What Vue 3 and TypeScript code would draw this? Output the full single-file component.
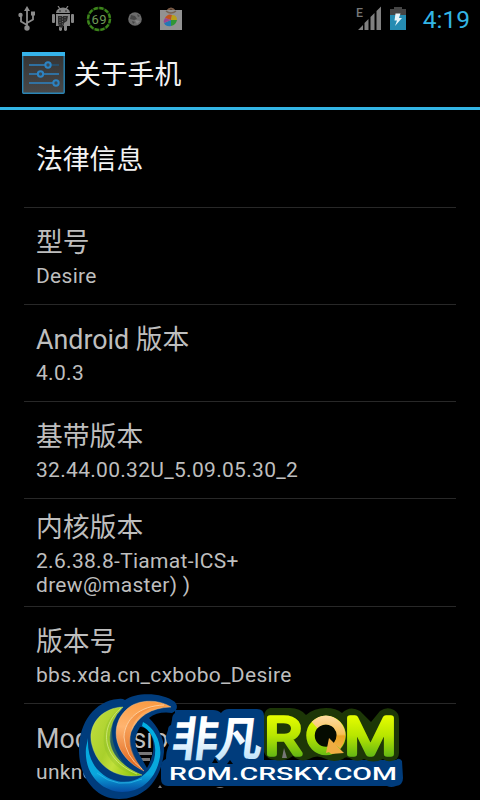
<script setup lang="ts">
interface Item {
  title: string;
  lines: string[];
  kind?: 'heading' | 'tall';
}

const items: Item[] = [
  { title: '法律信息', lines: [], kind: 'heading' },
  { title: '型号', lines: ['Desire'] },
  { title: 'Android 版本', lines: ['4.0.3'] },
  { title: '基带版本', lines: ['32.44.00.32U_5.09.05.30_2'] },
  { title: '内核版本', lines: ['2.6.38.8-Tiamat-ICS+', 'drew@master) )'], kind: 'tall' },
  { title: '版本号', lines: ['bbs.xda.cn_cxbobo_Desire'] },
  { title: 'Mod version', lines: ['unknown'] },
];
</script>

<template>
  <div class="phone">
    <!-- STATUS BAR -->
    <header class="status-bar">
      <div class="notifications">
        <svg class="usb" width="20" height="26" viewBox="0 0 20 26">
          <g fill="none" stroke="#8c8c8c" stroke-width="1.8">
            <path d="M10 4v17M10 19L4 15.500V11M10 17l6-3.500V9" />
          </g>
          <g fill="#8c8c8c">
            <path d="M10 0l3 5H7z" />
            <circle cx="10" cy="22" r="2.700" />
            <circle cx="3.500" cy="9" r="2.200" />
            <path d="M14 5.500h4v4h-4z" />
          </g>
        </svg>
        <svg class="droid" width="24" height="26" viewBox="0 0 24 26">
          <path d="M7 0l2 3M17 0l-2 3" stroke="#858585" stroke-width="1.200" />
          <path d="M5 7a7 5.500 0 0 1 14 0z" fill="#858585" />
          <g fill="#858585">
            <rect x="1" y="8" width="3" height="9" rx="1" />
            <rect x="20" y="8" width="3" height="9" rx="1" />
            <path d="M5 8h14v12h-3v4q-1.500 2-3 0v-4h-2v4q-1.500 2-3 0v-4H5z" />
          </g>
          <path d="M7 10h10l-1 5-3 2-1 5-4-1-1-4z" fill="#2c2c2c" />
          <path d="M9 11v8M11.500 10v9M14 11v4" stroke="#6c6c6c" stroke-dasharray="1 1.500" />
          <circle cx="9" cy="5" r=".8" fill="#222" />
          <circle cx="15" cy="5" r=".8" fill="#222" />
        </svg>
        <svg class="battery-ring" width="26" height="26" viewBox="0 0 26 26">
          <circle cx="13" cy="13" r="11" fill="none" stroke="#14300b" stroke-width="2.400" />
          <circle cx="13" cy="13" r="11" fill="none" stroke="#3d851b" stroke-width="2.400" stroke-dasharray="4.200 1.560" />
          <text x="13.200" y="17.700" text-anchor="middle" font-size="13" letter-spacing=".4" fill="#6f9b58">69</text>
        </svg>
        <svg class="moon" width="16" height="16" viewBox="0 0 16 16">
          <circle cx="8" cy="8" r="6.800" fill="#6b6b6b" />
          <path d="M4 4l4 1 2 3-3 1-4-1zM10 3l3 2-2 1zM5 10l3 1-2 2z" fill="#454545" />
          <path d="M8 9l5 1-3 3z" fill="#858585" />
        </svg>
        <svg class="market" width="24" height="26" viewBox="0 0 24 26">
          <path d="M8 5Q12 0 16 5" fill="none" stroke="#795a46" stroke-width="2" />
          <path d="M1 4h22v20H1z" fill="#929292" />
          <path d="M7 5q5 4 10 0" fill="none" stroke="#766454" stroke-width="1.500" />
          <path d="M6 12q3-5 7-3l-1 5z" fill="#c0531f" />
          <path d="M13 9q5 0 5 5l-6 0z" fill="#b9a019" />
          <path d="M18 14q-1 5-6 6v-6z" fill="#2f9636" />
          <path d="M12 14v6q-5 1-7-3z" fill="#2477b5" />
          <path d="M5 17q-1-2 1-5l6 2z" fill="#9b4790" />
        </svg>
      </div>
      <div class="system">
        <svg width="28" height="26" viewBox="0 0 28 26">
          <text x="1" y="11" font-size="13" font-weight="500" textLength="7" lengthAdjust="spacingAndGlyphs" fill="#777">E</text>
          <path d="M3 24l5-5v5zM9.500 24v-7l4-4v11zM15.500 24V11l4-4v17zM21.500 24V5l4.500-4.500V24z" fill="#808080" />
        </svg>
        <svg width="16" height="24" viewBox="0 0 16 24">
          <path d="M0 2h4V0h8v2h4v6H0z" fill="#454545" />
          <path d="M0 8h16v15H0z" fill="#258cb2" />
          <path d="M5.500 6.500h5L9 11h3l-7 8 2-5.500H4.500z" fill="#e8f5fa" />
        </svg>
        <span class="clock">4:19</span>
      </div>
    </header>

    <!-- ACTION BAR -->
    <div class="action-bar">
      <svg width="44" height="42" viewBox="0 0 44 42">
        <defs>
          <linearGradient id="tile" x2="0" y2="1">
            <stop stop-color="#333" />
            <stop offset="1" stop-color="#484848" />
          </linearGradient>
        </defs>
        <rect x=".7" y=".7" width="41.500" height="40.500" rx="1" fill="url(#tile)" stroke="#2a85b5" stroke-width="1.400" />
        <path d="M0 0h43v4H0z" fill="#36b3ea" />
        <g stroke="#2d83c2" stroke-width="1.500" fill="#3a4a55">
          <path d="M7 13h16M7 22h9M21 22h16M7 31h25" />
          <path d="M29 13h8" stroke="#235477" />
          <circle cx="26" cy="13" r="2.700" stroke-width="2" />
          <circle cx="18.500" cy="22" r="2.700" stroke-width="2" />
          <circle cx="34" cy="31" r="2.700" stroke-width="2" />
        </g>
      </svg>
      <h1>关于手机</h1>
    </div>

    <!-- PREFERENCE LIST -->
    <main class="list">
      <section v-for="item in items" :key="item.title" class="item" :class="item.kind">
        <h2>{{ item.title }}</h2>
        <p v-for="line in item.lines" :key="line">{{ line }}</p>
      </section>
    </main>

    <!-- WATERMARK -->
    <svg class="watermark" width="340" height="110" viewBox="70 690 340 110">
      <defs>
        <linearGradient id="lime" x1="0" y1=".2" x2="1" y2=".8">
          <stop stop-color="#bfdc3c" />
          <stop offset=".4" stop-color="#a9d02c" />
          <stop offset=".6" stop-color="#c2e03c" />
          <stop offset="1" stop-color="#8cc408" />
        </linearGradient>
        <linearGradient id="orange" x1=".5" x2=".4" y2="1">
          <stop stop-color="#fb9c44" />
          <stop offset=".4" stop-color="#ffb470" />
          <stop offset="1" stop-color="#dc5f16" />
        </linearGradient>
        <linearGradient id="cyan" x2="0" y2="1">
          <stop stop-color="#00b0e2" />
          <stop offset=".75" stop-color="#0aa6dc" />
          <stop offset="1" stop-color="#064ca4" />
        </linearGradient>
        <linearGradient id="ice" gradientUnits="objectBoundingBox" x2="0" y2="1">
          <stop offset=".45" stop-color="#fff" />
          <stop offset=".85" stop-color="#c2e4fa" />
        </linearGradient>
        <linearGradient id="rom" gradientUnits="userSpaceOnUse" x1="0" y1="714" x2="0" y2="757">
          <stop stop-color="#eaff00" />
          <stop offset=".5" stop-color="#b8e600" />
          <stop offset="1" stop-color="#62b614" />
        </linearGradient>
        <linearGradient id="gold" gradientUnits="userSpaceOnUse" x1="0" y1="715" x2="0" y2="750">
          <stop stop-color="#ffdda6" />
          <stop offset=".55" stop-color="#f7c056" />
          <stop offset=".6" stop-color="#eda522" />
          <stop offset="1" stop-color="#f2b04a" />
        </linearGradient>
      </defs>

      <!-- grey stamp showing through the gaps -->
      <path d="M138 752h14v3h-14zM138 758h12v3h-12z" fill="#777" />
      <path d="M153 788h5l2-3 2 3h6M184 788h5M216 787q4 2 8 0" fill="#777" />

      <!-- swirl -->
      <path fill="#003c7c" fill-rule="evenodd" d="M79 750C79 722 95 701 118 699Q122 698 125 700C136 692 162 692 175 702Q180 709 172 713Q158 711 149 718C158 727 165 739 164 752C161 782 143 799 119 799C95 799 79 777 79 750ZM140 727Q132 740 138 752L147 768Q158 748 150 733Q145 726 140 727Z" />
      <path fill="url(#cyan)" d="M143 722C155 728 162 743 160 757C156 779 142 792 122 792C99 791 84 772 86 748L88 738Q87 757 97 769C116 790 146 784 154 760C158 744 152 731 142 726Z" />
      <path fill="none" stroke="#2bbbe8" stroke-width=".8" d="M97 773Q118 790 142 779" />
      <path fill="url(#lime)" stroke="#d2e878" stroke-width=".4" d="M123 707C99 708 87 728 92 745C97 766 116 780 142 775C124 768 112 756 110 742Q108 722 123 707Z" />
      <path fill="#86b823" opacity=".3" d="M121 708C108 720 106 754 137 775C119 772 107 760 104 745Q101 721 121 708Z" />
      <path fill="none" stroke="#dcef90" stroke-width=".7" d="M121 708C100 726 99 758 137 774" />
      <path fill="url(#orange)" stroke="#ffce98" stroke-width=".4" d="M171 707C158 699 138 699 127 709C108 726 114 757 144 771C132 758 127 745 131 732Q141 708 171 707Z" />
      <path fill="#e77928" opacity=".35" d="M165 705C137 708 128 727 131 745Q133 757 143 770C124 757 120 739 127 724Q137 706 165 705Z" />
      <path fill="none" stroke="#ffe3bd" stroke-width=".7" d="M164 705C139 706 125 719 124 737Q125 756 142 769" />

      <!-- backing shapes -->
      <path fill="#003c7c" d="M175 710h38q5 0 8 3 3-4 8-4h28q7 0 7 7v44h132q3-3 6 1l1 17q0 7-7 8-5 2-9 0H168q-7 0-7-7v-13q0-5 5-7 0-8 3-14-4-4-3-9l2-6q0-4 3-5l1-5q0-5 3-7z" />
      <path fill="#1d3707" d="M270 708h20q10 0 16 7 8-7 20-7 10 0 16 5 8-8 18-2l11 11 9-11q7-5 14-1 5 3 5 9v34q0 7-8 8-4 1-8-2-10 5-19 0-5 3-11 1-7-5-10-1-9 4-17 0-9-5-17 0-8 4-16-3-9 6-18 4-9-1-11-8v-36q1-7 6-8z" />
      <path fill="#000" d="M227 764l3-4 3 4zM212 763l3-5 3 5z" />
      <path fill="#777" d="M282 758l2-10 3 10z" />

      <!-- wordmark -->
      <text class="brand" transform="translate(170 755.500) skewX(-7)" font-size="47" textLength="91" fill="url(#ice)">非凡</text>
      <g class="rom" fill="url(#rom)" stroke="url(#rom)">
        <text x="265" y="753.500" font-size="50" textLength="37" lengthAdjust="spacingAndGlyphs">R</text>
        <text x="345" y="753.500" font-size="50" textLength="51" lengthAdjust="spacingAndGlyphs">M</text>
      </g>
      <circle cx="326" cy="735.500" r="15.500" fill="#050b01" stroke="url(#rom)" stroke-width="8.500" />
      <path d="M314.500 725Q326 715 337 725Q345 735 337 746" fill="none" stroke="url(#gold)" stroke-width="8.500" />
      <path d="M329 738l15 15-13 1-2-2-3 1z" fill="#f0ad42" />
      <text class="site" x="169" y="780" font-size="18" textLength="228" lengthAdjust="spacingAndGlyphs" fill="#fff">ROM.CRSKY.COM</text>
    </svg>
  </div>
</template>

<style>
body {
  background: #000;
  overflow: hidden;
}
</style>

<style scoped>
.phone {
  position: relative;
  width: 480px;
  height: 800px;
  overflow: hidden;
  background: #000;
  color: #bebebe;
  font-family: Roboto, 'Noto Sans CJK SC', sans-serif;
}

/* == STATUS BAR == */
.status-bar {
  display: flex;
  justify-content: space-between;
  height: 38px;
  padding: 0 10px 0 17px;
  box-sizing: border-box;
}

.notifications,
.system {
  display: flex;
  align-items: center;
}

.notifications {
  gap: 14px;
}

.battery-ring {
  margin-left: -3px;
}

.moon {
  margin: 0 3px 0 1px;
}

.market {
  margin-left: -1px;
}

.system {
  gap: 7px;
}

.clock {
  margin-left: 10px;
  padding-top: 2px;
  font-size: 24.5px;
  line-height: 38px;
  color: #33b5e5;
}

/* == ACTION BAR == */
.action-bar {
  display: flex;
  align-items: center;
  gap: 8px;
  height: 72px;
  padding-left: 22px;
  box-sizing: border-box;
  border-bottom: 3px solid #33b5e5;
}

.action-bar h1 {
  margin: 0;
  padding-top: 4px;
  font-size: 26.8px;
  line-height: 36px;
  font-weight: 400;
  color: #f3f3f3;
}

/* == LIST == */
.list {
  padding: 0 24px;
}

.item {
  display: flex;
  flex-direction: column;
  justify-content: center;
  height: 97px;
  padding: 0 12px;
  box-sizing: border-box;
  border-bottom: 1px solid #282828;
}

.item.heading {
  height: 98px;
  color: #f3f3f3;
}

.item.tall {
  height: 108px;
}

.item h2 {
  margin: 0;
  padding-top: 1px;
  font-size: 26.8px;
  line-height: 36px;
  font-weight: 400;
  white-space: nowrap;
}

.item.heading h2 {
  padding-top: 3px;
}

.item p {
  margin: 0;
  font-size: 21px;
  line-height: 24px;
  letter-spacing: 0.3px;
  white-space: nowrap;
}

/* room between the title and its summary */
.item h2 + p {
  padding-top: 3px;
}

/* == WATERMARK == */
.watermark {
  position: absolute;
  left: 70px;
  bottom: 0;
}

.brand {
  font-family: 'Noto Sans CJK SC', sans-serif;
  font-weight: 700;
}

.rom {
  font-family: Roboto, sans-serif;
  font-weight: 300;
  stroke-width: 5.5px;
  stroke-linejoin: round;
  stroke-linecap: round;
}

.site {
  font-family: Roboto, sans-serif;
  font-weight: 500;
}
</style>
